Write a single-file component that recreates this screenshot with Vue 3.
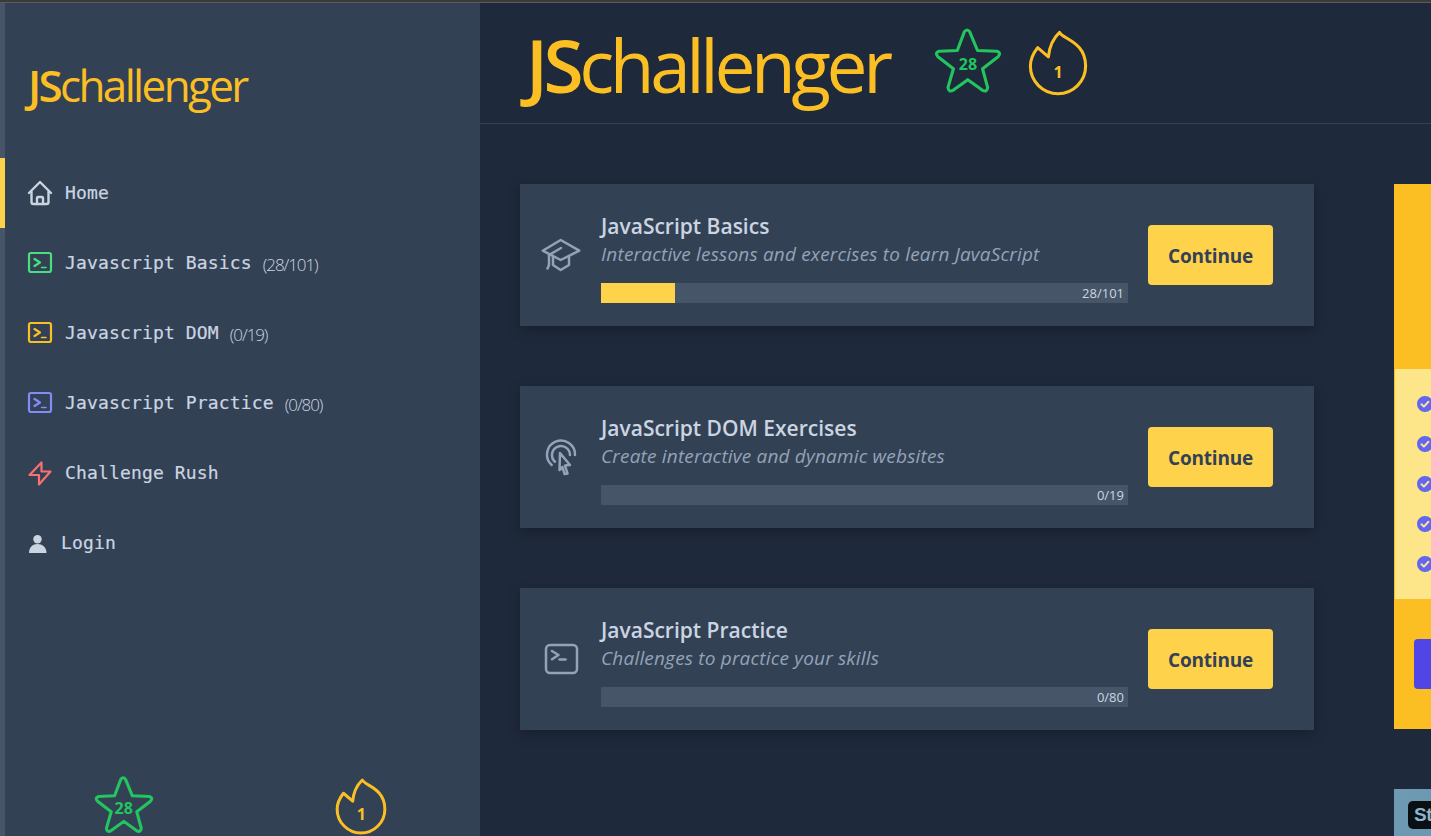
<template>
  <div class="top-line"></div>
  <div class="page">
    <aside class="sidebar">
      <div class="side-logo logo"><b>JS</b>challenger</div>
      <nav class="nav">
        <a v-for="item in navItems" :key="item.label" class="nav-item" :class="{ active: item.active }">
          <svg v-if="item.icon === 'home'" class="nav-icon" viewBox="0 0 26 26" fill="none" stroke="#cbd5e1" stroke-width="2.400" stroke-linecap="round" stroke-linejoin="round">
            <path d="M2 13 13 2l11 11" />
            <path d="M4.500 12v10a2 2 0 0 0 2 2h13a2 2 0 0 0 2-2V12" />
            <path d="M10 24v-6a1 1 0 0 1 1-1h4a1 1 0 0 1 1 1v6" />
          </svg>
          <svg v-else-if="item.icon === 'terminal'" class="nav-icon" viewBox="0 0 26 26" fill="none" :stroke="item.color" stroke-width="2.200" stroke-linecap="round" stroke-linejoin="round">
            <rect x="2" y="3" width="22" height="19" rx="2" />
            <path d="m7.500 9 5.500 3.500L7.500 16" />
            <path d="M14.500 17.500h4.500" stroke-width="1.500" />
          </svg>
          <svg v-else-if="item.icon === 'bolt'" class="nav-icon" viewBox="0 0 26 26" fill="none" stroke="#f87171" stroke-width="2.200" stroke-linecap="round" stroke-linejoin="round">
            <path d="M14.500 2.500v9h9L12 24.500v-9.500H2.500z" />
          </svg>
          <svg v-else class="nav-icon user-icon" viewBox="0 0 20 20" fill="#cbd5e1">
            <circle cx="9.500" cy="6.300" r="4.200" />
            <path d="M1 20c0-6 4-9 8.500-9s9 3 9 9z" />
          </svg>
          <span class="nav-label">{{ item.label }}</span>
          <span v-if="item.count" class="nav-count">{{ item.count }}</span>
        </a>
      </nav>
      <div class="side-stats">
        <div class="badge star side-star">
          <svg viewBox="0 0 175 170" fill="none" stroke="#22c55e" stroke-width="9" stroke-linejoin="round">
            <path :d="starPath" />
          </svg>
          <span>28</span>
        </div>
        <div class="badge flame side-flame">
          <svg viewBox="0 0 156 172" fill="none" stroke="#fbbf24" stroke-width="9" stroke-linejoin="round">
            <path :d="flamePath" />
          </svg>
          <span>1</span>
        </div>
      </div>
    </aside>

    <main class="main">
      <header class="header">
        <div class="head-logo logo"><b>JS</b>challenger</div>
        <div class="badge star head-star">
          <svg viewBox="0 0 175 170" fill="none" stroke="#22c55e" stroke-width="8" stroke-linejoin="round">
            <path :d="starPath" />
          </svg>
          <span>28</span>
        </div>
        <div class="badge flame head-flame">
          <svg viewBox="0 0 156 172" fill="none" stroke="#fbbf24" stroke-width="8" stroke-linejoin="round">
            <path :d="flamePath" />
          </svg>
          <span>1</span>
        </div>
      </header>

      <div class="content">
        <section class="cards">
          <article v-for="course in courses" :key="course.title" class="card">
            <svg v-if="course.icon === 'cap'" class="card-icon" viewBox="0 0 40 40" fill="none" stroke="#94a3b8" stroke-width="2.500" stroke-linecap="round" stroke-linejoin="round">
              <path d="M19.700 5 1.700 15.700 19.700 25l18.600-9.300z" />
              <path d="M12 21v9l7.700 5 8.300-5v-9" />
              <path d="M20 13 8 20v10l-1.500 3.500" />
            </svg>
            <svg v-else-if="course.icon === 'click'" class="card-icon" viewBox="0 0 40 40" fill="none" stroke="#94a3b8" stroke-width="2.500" stroke-linecap="round" stroke-linejoin="round">
              <path d="M10.700 28A14 14 0 1 1 34 18" />
              <path d="M14 24.700A9 9 0 1 1 29 18" />
              <path d="m19 16 10 12-5 .500 2.500 8-3 .500-2-7-3 3z" />
            </svg>
            <svg v-else class="card-icon" viewBox="0 0 40 40" fill="none" stroke="#94a3b8" stroke-width="2.500" stroke-linecap="round" stroke-linejoin="round">
              <rect x="5" y="6" width="31" height="28" rx="4" />
              <path d="m11 12 6.500 4-6.500 4.300" />
              <path d="M18.500 20.500h6" />
            </svg>
            <div class="card-body">
              <h2>{{ course.title }}</h2>
              <p>{{ course.text }}</p>
              <div class="bar">
                <div class="bar-fill" :style="{ width: course.percent + '%' }"></div>
                <span>{{ course.done }}/{{ course.total }}</span>
              </div>
            </div>
            <button class="btn" type="button">Continue</button>
          </article>
        </section>

        <aside class="promo-col">
          <div class="promo">
            <div class="promo-head"></div>
            <ul class="promo-list">
              <li v-for="n in 5" :key="n">
                <svg viewBox="0 0 16 16">
                  <circle cx="8" cy="8" r="8" fill="#6366f1" />
                  <path d="m4.500 8.200 2.400 2.400 4.500-4.800" fill="none" stroke="#fde68a" stroke-width="2" stroke-linecap="round" stroke-linejoin="round" />
                </svg>
              </li>
            </ul>
            <div class="promo-foot"><div class="promo-btn"></div></div>
          </div>
          <div class="ad">
            <div class="ad-chip">St</div>
          </div>
        </aside>
      </div>
    </main>
  </div>
</template>

<script setup>
const navItems = [
  { label: "Home", icon: "home", active: true },
  { label: "Javascript Basics", icon: "terminal", color: "#4ade80", count: "(28/101)" },
  { label: "Javascript DOM", icon: "terminal", color: "#fbbf24", count: "(0/19)" },
  { label: "Javascript Practice", icon: "terminal", color: "#818cf8", count: "(0/80)" },
  { label: "Challenge Rush", icon: "bolt" },
  { label: "Login", icon: "user" },
];

const courses = [
  { title: "JavaScript Basics", text: "Interactive lessons and exercises to learn JavaScript", icon: "cap", done: 28, total: 101, percent: 14 },
  { title: "JavaScript DOM Exercises", text: "Create interactive and dynamic websites", icon: "click", done: 0, total: 19, percent: 0 },
  { title: "JavaScript Practice", text: "Challenges to practice your skills", icon: "terminal", done: 0, total: 80, percent: 0 },
];

const starPath =
  "M78 10Q85 0 92 10L112 58 162 60Q174 64 165 74L125 105 138 153Q137 167 124 160L87 133 50 160Q37 167 36 153L50 105 10 74Q1 64 13 60L60 58Z";
const flamePath =
  "M82 6C90 24 150 30 150 94A72 72 0 0 1 6 94C6 74 14 60 25 46L53 70C55 46 65 22 82 6Z";
</script>

<style scoped>
.top-line {
  height: 2px;
  background: #3a3a3a;
  border-bottom: 1px solid #5c5c5c;
}

.page {
  display: flex;
  height: 833px;
  overflow: hidden;
  background: #1e293b;
  font-family: "Open Sans", "Noto Sans", sans-serif;
}

.sidebar {
  flex: 0 0 475px;
  display: flex;
  flex-direction: column;
  background: #334155;
  border-left: 5px solid #475569;
}

.logo {
  color: #fbbf24;
  font-family: "Open Sans", sans-serif;
  font-weight: 400;
}

.logo b {
  font-weight: 600;
}

.side-logo {
  margin: 54px 0 0 23px;
  height: 101px;
  font-size: 44px;
  line-height: 56px;
  letter-spacing: -2.65px;
}

.nav {
  display: flex;
  flex-direction: column;
}

.nav-item {
  display: flex;
  align-items: center;
  height: 70px;
  margin-left: -5px;
  padding-left: 22px;
  border-left: 5px solid transparent;
}

.nav-item.active {
  border-left-color: #fcd34d;
}

.nav-icon {
  width: 26px;
  height: 26px;
  flex: none;
  margin-right: 12px;
}

.user-icon {
  width: 20px;
  height: 20px;
  margin-left: 1px;
  margin-right: 13px;
}

.nav-label {
  color: #cbd5e1;
  font-family: "DejaVu Sans Mono", monospace;
  font-size: 18px;
  letter-spacing: 0.15px;
  -webkit-text-stroke: 0.2px #cbd5e1;
  margin-top: -2px;
}

.nav-count {
  margin-left: 11px;
  color: #cbd5e1;
  font-size: 17px;
  font-weight: 300;
  letter-spacing: -1.1px;
  padding-top: 3px;
}

.side-stats {
  margin-top: auto;
  display: grid;
  grid-template-columns: 1fr 1fr;
  justify-items: center;
  align-items: end;
  padding-bottom: 1px;
}

.badge {
  position: relative;
}

.badge svg {
  display: block;
  width: 100%;
  height: 100%;
}

.badge span {
  position: absolute;
  left: 0;
  right: 0;
  text-align: center;
  font-size: 16px;
  font-weight: 700;
  line-height: 18px;
}

.star span {
  color: #22c55e;
}

.flame span {
  color: #fbbf24;
}

.side-star {
  width: 60px;
  height: 58px;
  margin-bottom: 1px;
}

.side-star span {
  top: 23px;
}

.side-flame {
  width: 52px;
  height: 57px;
}

.side-flame span {
  top: 27px;
}

.main {
  flex: 1;
  min-width: 0;
  display: flex;
  flex-direction: column;
}

.header {
  flex: none;
  display: flex;
  align-items: center;
  height: 120px;
  padding-left: 40px;
  border-bottom: 1px solid #334155;
}

.head-logo {
  width: 408px;
  margin-left: 6px;
  font-size: 73px;
  letter-spacing: -4.4px;
  line-height: 120px;
  margin-top: 4px;
}

.head-star {
  width: 68px;
  height: 66px;
  margin-right: 26px;
  margin-top: -5px;
}

.head-star span {
  top: 27px;
}

.head-flame {
  width: 60px;
  height: 66px;
  margin-top: -1px;
}

.head-flame span {
  top: 33px;
}

.content {
  display: flex;
  padding: 60px 0 0 40px;
  gap: 80px;
}

.cards {
  flex: 0 0 794px;
  display: flex;
  flex-direction: column;
  gap: 60px;
}

.card {
  display: flex;
  align-items: center;
  height: 142px;
  padding: 0 41px 0 21px;
  background: #334155;
  box-shadow: 0 4px 12px rgba(0, 0, 0, 0.25);
}

.card-icon {
  width: 40px;
  height: 40px;
  flex: none;
}

.card-body {
  width: 527px;
  margin: 0 20px;
}

.card-body h2 {
  margin: 0;
  color: #cbd5e1;
  font-size: 21px;
  font-weight: 600;
  line-height: 28px;
}

.card-body p {
  margin: 0 0 15px;
  color: #94a3b8;
  font-size: 19px;
  font-style: italic;
  font-weight: 400;
  line-height: 28px;
  letter-spacing: 0.18px;
}

.bar {
  position: relative;
  display: flex;
  justify-content: flex-end;
  height: 20px;
  background: #475569;
  margin-bottom: -5px;
}

.bar-fill {
  position: absolute;
  left: 0;
  top: 0;
  bottom: 0;
  background: #ffd24c;
}

.bar span {
  position: relative;
  padding-right: 4px;
  color: #cbd5e1;
  font-size: 13px;
  line-height: 20px;
}

.btn {
  flex: none;
  width: 125px;
  height: 60px;
  padding-top: 2px;
  border: none;
  border-radius: 4px;
  background: #ffd24c;
  color: #334155;
  font-family: inherit;
  font-size: 19px;
  font-weight: 700;
  letter-spacing: -0.2px;
}

.promo-col {
  flex: 0 0 420px;
}

.promo {
  height: 545px;
  background: #fbbf24;
  display: flex;
  flex-direction: column;
}

.promo-head {
  height: 185px;
}

.promo-list {
  display: flex;
  flex-direction: column;
  gap: 24px;
  height: 230px;
  box-sizing: border-box;
  margin: 0 0 0 1px;
  padding: 27px 0 0 22px;
  list-style: none;
  background: #fde68a;
}

.promo-list li {
  height: 16px;
}

.promo-list svg {
  display: block;
  width: 16px;
  height: 16px;
}

.promo-foot {
  padding: 40px 0 0 20px;
}

.promo-btn {
  width: 200px;
  height: 50px;
  border-radius: 4px;
  background: #4f46e5;
}

.ad {
  height: 120px;
  margin-top: 60px;
  padding: 12px 0 0 14px;
  background: linear-gradient(120deg, #6f9ab3, #5a86a1);
}

.ad-chip {
  width: 80px;
  height: 28px;
  padding-left: 6px;
  border-radius: 5px;
  background: #0a0f14;
  color: #8fb4c8;
  font-family: "Liberation Sans", sans-serif;
  font-size: 19px;
  font-weight: 700;
  line-height: 28px;
  letter-spacing: -0.5px;
}
</style>

<style>
html,
body {
  overflow: hidden;
  background: #1e293b;
}
</style>
